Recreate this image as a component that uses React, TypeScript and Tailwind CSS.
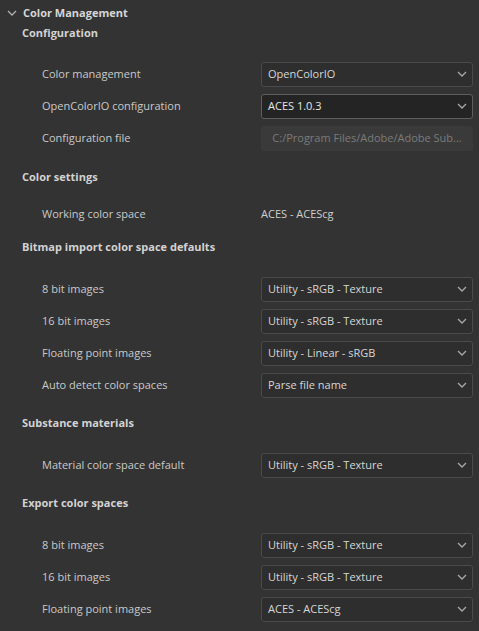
import React from "react";

type Row = { label: string; value: string; kind?: "select" | "active" | "disabled" | "text" };

const Chevron = ({ className = "" }: { className?: string }) => (
  <svg width="10" height="6" viewBox="0 0 10 6" className={className}>
    <path d="M1 1l4 4 4-4" fill="none" stroke="currentColor" strokeWidth="1.3" />
  </svg>
);

const Field = ({ row }: { row: Row }) => {
  if (row.kind === "text") {
    return <div className="w-[212px] text-[#cfcfcf]">{row.value}</div>;
  }
  if (row.kind === "disabled") {
    return (
      <div className="w-[212px] h-[25px] rounded-[3px] bg-[#3a3a3a] flex items-center justify-center text-[#7a7a7a]">
        {row.value}
      </div>
    );
  }
  const active = row.kind === "active";
  return (
    <div
      className={
        active
          ? "w-[212px] h-[25px] rounded-[3px] border border-[#5e5e5e] bg-[#242424] flex items-center pl-[6px] pr-[5px] text-[#e6e6e6]"
          : "w-[212px] h-[25px] rounded-[3px] border border-[#4a4a4a] bg-[#2e2e2e] flex items-center pl-[6px] pr-[5px] text-[#d6d6d6]"
      }
    >
      <span className="flex-1">{row.value}</span>
      <Chevron className="text-[#a8a8a8]" />
    </div>
  );
};

const Section = ({ title, rows, mt, gap }: { title: string; rows: Row[]; mt: string; gap: string }) => (
  <div className={mt}>
    <div className="h-[20px] flex items-center pl-[22px] font-bold text-[#d2d2d2]">{title}</div>
    <div className={gap}>
      {rows.map((r) => (
        <div key={r.label} className="h-[32px] flex items-center pl-[42px] pr-[6px]">
          <div className="flex-1 text-[#c9c9c9]">{r.label}</div>
          <Field row={r} />
        </div>
      ))}
    </div>
  </div>
);

export default function App() {
  return (
    <div
      className="w-[479px] h-[631px] bg-[#333333] text-[11px] overflow-hidden"
      style={{ fontFamily: '"Open Sans", "Noto Sans", sans-serif' }}
    >
      <div className="h-[26px] flex items-center pl-[6px] font-bold text-[#d6d6d6]">
        <Chevron className="text-[#b0b0b0] mr-[6px] ml-[1px]" />
        Color Management
      </div>
      <Section
        title="Configuration"
        mt="mt-[-3px]"
        gap="mt-[15px]"
        rows={[
          { label: "Color management", value: "OpenColorIO" },
          { label: "OpenColorIO configuration", value: "ACES 1.0.3", kind: "active" },
          { label: "Configuration file", value: "C:/Program Files/Adobe/Adobe Sub...", kind: "disabled" },
        ]}
      />
      <Section
        title="Color settings"
        mt="mt-[13px]"
        gap="mt-[11px]"
        rows={[{ label: "Working color space", value: "ACES - ACEScg", kind: "text" }]}
      />
      <Section
        title="Bitmap import color space defaults"
        mt="mt-[7px]"
        gap="mt-[16px]"
        rows={[
          { label: "8 bit images", value: "Utility - sRGB - Texture" },
          { label: "16 bit images", value: "Utility - sRGB - Texture" },
          { label: "Floating point images", value: "Utility - Linear - sRGB" },
          { label: "Auto detect color spaces", value: "Parse file name" },
        ]}
      />
      <Section
        title="Substance materials"
        mt="mt-[12px]"
        gap="mt-[16px]"
        rows={[{ label: "Material color space default", value: "Utility - sRGB - Texture" }]}
      />
      <Section
        title="Export color spaces"
        mt="mt-[12px]"
        gap="mt-[16px]"
        rows={[
          { label: "8 bit images", value: "Utility - sRGB - Texture" },
          { label: "16 bit images", value: "Utility - sRGB - Texture" },
          { label: "Floating point images", value: "ACES - ACEScg" },
        ]}
      />
    </div>
  );
}
